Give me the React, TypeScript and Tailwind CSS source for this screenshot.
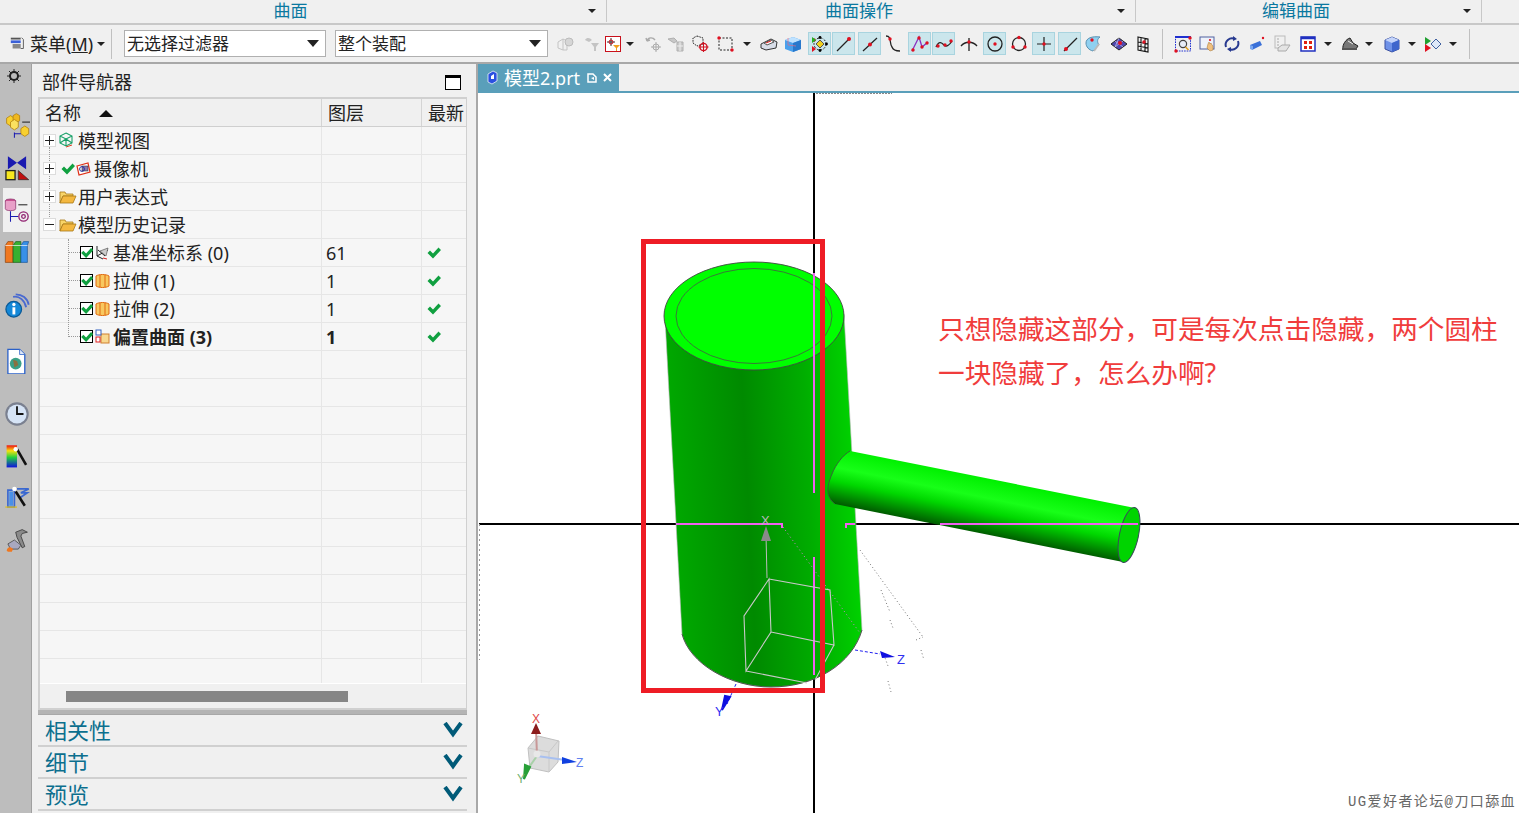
import type { ReactNode } from 'react'
import clsx from 'clsx'

const Ic = ({ children, s = 20 }: { children: ReactNode; s?: number }) => (
    <svg width={s} height={s} viewBox="0 0 20 20" className="block shrink-0">{children}</svg>
)
const Pt = ({ x, y, r = 1.7 }: { x: number; y: number; r?: number }) => <circle cx={x} cy={y} r={r} fill="#e01020" />
const Arrow = () => <div className="w-0 h-0 mx-auto border-l-[4px] border-r-[4px] border-t-[4px] border-l-transparent border-r-transparent border-t-[#222]" />

// toolbar, left to right. ml values come from measuring the icon centres
const tools: { ml: string; icon?: ReactNode; on?: boolean; arrow?: boolean; sep?: boolean }[] = [
    { ml: 'ml-[6px]', icon: <Ic><path d="M3 8l5-3v11l-5-2zM8 5l4 2v9l-4 0" fill="none" stroke="#c4c4c4" /><circle cx="14" cy="8" r="4" fill="#d6d6d6" stroke="#bbb" /></Ic> },
    { ml: 'ml-[4px]', icon: <Ic><path d="M4 6c2-3 5-2 7 0l-3 2zM10 9h8l-3 4v4h-2v-4z" fill="#c4c4c4" /></Ic> },
    { ml: 'ml-0', icon: <Ic><rect x="2.5" y="2.5" width="15" height="15" fill="#fff" stroke="#c8101c" /><path d="M8 4v8M4 8h8" stroke="#333" /><circle cx="8" cy="8" r="2" fill="none" stroke="#c8101c" /><path d="M10 11h7l-3 3v3h-1v-3z" fill="#f0a020" /></Ic> },
    { ml: 'ml-px', arrow: true },
    { ml: 'ml-[8px]', icon: <Ic><path d="M3 7c1-4 6-4 8-1M3 7l-1-3M3 7l3-1" fill="none" stroke="#aaa" strokeWidth="1.4" /><circle cx="12" cy="13" r="3" fill="none" stroke="#aaa" /><path d="M12 8v10M7 13h10" stroke="#aaa" /></Ic> },
    { ml: 'ml-0', icon: <Ic><path d="M2 5l6-1 3 3-3 2zM11 8h6v9h-6z" fill="#c8c8c8" stroke="#b0b0b0" /><path d="M14 8v9M11 12h6" stroke="#eee" /></Ic> },
    { ml: 'ml-[3px]', icon: <Ic><path d="M6 2l6 2v6l-6 2-4-3V4z" fill="none" stroke="#222" strokeDasharray="1.5 1" /><circle cx="12.5" cy="13" r="3.6" fill="none" stroke="#d01020" strokeWidth="1.4" /><path d="M12.5 8v10M7.5 13h10" stroke="#d01020" /></Ic> },
    { ml: 'ml-[3px]', icon: <Ic><rect x="3" y="4" width="13" height="12" fill="none" stroke="#222" strokeDasharray="2 1.5" /><Pt x={3} y={4} /><Pt x={16} y={16} /></Ic> },
    { ml: 'ml-[5px]', arrow: true },
    { ml: 'ml-[6px]', icon: <Ic><path d="M2 10l10-5 6 3-1 6-10 2-5-2z" fill="#d8dde8" stroke="#333" /><path d="M5 9l7-3 3 2-7 3z" fill="#fff" stroke="#555" /><path d="M7 9l5-2" stroke="#e02020" /></Ic> },
    { ml: 'ml-[2px]', icon: <Ic><path d="M2 6l8-3 8 3v9l-8 3-8-3z" fill="#4aa0ec" /><path d="M2 6l8 3 8-3-8-3z" fill="#bfe2ff" /><path d="M10 9v9l8-3V6z" fill="#2878cc" /><path d="M5 4v7l8 1" fill="none" stroke="#e86a80" strokeWidth=".7" /></Ic> },
    { ml: 'ml-[4px]', on: true, icon: <Ic><circle cx="10" cy="10" r="6" fill="none" stroke="#222" strokeDasharray="2 1.5" /><path d="M10 6l4 4-4 4-4-4z" fill="#f0d020" stroke="#555" /><Pt x={4} y={6} /><path d="M2 3l4 3-4 3z" fill="#20b020" /><path d="M2 12l4 3-4 3z" fill="#e01020" /><circle cx="10" cy="3.5" r="1.4" /><circle cx="10" cy="16.5" r="1.4" /><circle cx="16.5" cy="10" r="1.4" /></Ic> },
    { ml: 'ml-px', on: true, icon: <Ic><path d="M3 17L16 4" stroke="#222" strokeWidth="1.2" /><Pt x={15} y={5} r={2} /></Ic> },
    { ml: 'ml-[3px]', on: true, icon: <Ic><path d="M3 17L17 4" stroke="#222" strokeWidth="1.2" /><Pt x={10} y={10.5} r={2} /></Ic> },
    { ml: 'ml-px', icon: <Ic><path d="M3 2c6 0 3 7 6 11 1 3 4 4 8 4" fill="none" stroke="#222" strokeWidth="1.3" /><Pt x={7} y={5} /></Ic> },
    { ml: 'ml-[4px]', on: true, icon: <Ic><path d="M2 17L9 3l3 10 6-5" fill="none" stroke="#8a30c0" strokeWidth="1.3" /><Pt x={3} y={16} /><Pt x={9} y={4} /><Pt x={12} y={13} /><Pt x={17} y={9} /></Ic> },
    { ml: 'ml-px', on: true, icon: <Ic><path d="M2 13c3-7 6-4 8-2s5 1 8-4" fill="none" stroke="#222" strokeWidth="1.3" /><Pt x={4} y={12} /><Pt x={11} y={11} /><Pt x={17} y={7} /></Ic> },
    { ml: 'ml-[3px]', icon: <Ic><path d="M2 12c4-5 12-5 16 0M10 4v13" fill="none" stroke="#222" strokeWidth="1.3" /><Pt x={10} y={8} /></Ic> },
    { ml: 'ml-[3px]', on: true, icon: <Ic><circle cx="10" cy="10" r="7" fill="none" stroke="#222" strokeWidth="1.3" /><Pt x={10} y={10} /></Ic> },
    { ml: 'ml-[2px]', icon: <Ic><circle cx="10" cy="10" r="6.5" fill="none" stroke="#222" strokeWidth="1.3" /><Pt x={10} y={3.5} /><Pt x={4} y={13} /><Pt x={16} y={13} /></Ic> },
    { ml: 'ml-[2px]', on: true, icon: <Ic><path d="M10 3v14M3 10h14" stroke="#222" strokeWidth="1.2" /><Pt x={10} y={10} /></Ic> },
    { ml: 'ml-[3px]', on: true, icon: <Ic><path d="M4 17L17 4" stroke="#222" strokeWidth="1.2" /><Pt x={6} y={15} r={2} /></Ic> },
    { ml: 'ml-px', icon: <Ic><path d="M3 9c0-5 6-7 14-6-3 2-3 5-1 8l-6 6c-4-1-7-4-7-8z" fill="#8fd0f0" stroke="#5a90b0" /><path d="M16 10l-5 7" stroke="#bbb" strokeWidth="2" /><Pt x={9} y={6} /></Ic> },
    { ml: 'ml-[4px]', icon: <Ic><path d="M2 10l8-6 8 6-8 6z" fill="#5048b0" stroke="#222" /><path d="M6 7l8 6M10 4l-4 9M14 7l-8 6" stroke="#c8c8f0" strokeWidth=".7" /><Pt x={11} y={9} r={2} /></Ic> },
    { ml: 'ml-[2px]', icon: <Ic><path d="M5 3l10 2v13L5 16zM8 4v12M12 4.5v13M5 8l10 2M5 12l10 2" fill="none" stroke="#111" strokeWidth="1.1" /><Pt x={11} y={8} /></Ic> },
    { ml: 'ml-[8px]', sep: true },
    { ml: 'ml-[9px]', icon: <Ic><rect x="2.5" y="3" width="15" height="14" fill="none" stroke="#2030d0" strokeDasharray="1.6 1" /><path d="M2 3h16" stroke="#2030d0" strokeWidth="2" /><circle cx="10" cy="10" r="3.6" fill="#e8eef8" stroke="#444" strokeWidth="1.2" /><path d="M12.5 13l3 3" stroke="#e0a020" strokeWidth="1.6" /><Pt x={17} y={4} /><Pt x={3} y={17} /></Ic> },
    { ml: 'ml-[3px]', icon: <Ic><rect x="2" y="3" width="14" height="12" fill="#eef2fa" stroke="#5060a0" /><path d="M10 10l1-2 1 2 1-1 1 2 1 1v4l-3 1-3-3z" fill="#f0c080" stroke="#a07030" strokeWidth=".5" /><Pt x={12} y={6} r={1.1} /></Ic> },
    { ml: 'ml-[2px]', icon: <Ic><path d="M4 13a6.5 6.5 0 0 1 9-8M16 7a6.5 6.5 0 0 1-9 8" fill="none" stroke="#283a90" strokeWidth="2" /><path d="M11 2l4 3-4 2zM9 13l-4 2 4 3z" fill="#283a90" /></Ic> },
    { ml: 'ml-[3px]', icon: <Ic><path d="M3 11l10-4 2 4-10 5z" fill="#3a70d8" /><path d="M3 11l3 1v4l-3-1z" fill="#7aa8f0" /><Pt x={16} y={4} r={1.2} /></Ic> },
    { ml: 'ml-[3px]', icon: <Ic><rect x="3" y="2" width="10" height="12" fill="#f0f0f0" stroke="#bbb" /><path d="M5 5h2M5 8h2M5 11h2" stroke="#aaa" /><path d="M6 14l4-3h8l-4 6H6z" fill="#e4e4e4" stroke="#aaa" /></Ic> },
    { ml: 'ml-[4px]', icon: <Ic><rect x="3" y="3" width="14" height="14" fill="#fff" stroke="#2030c0" strokeWidth="1.5" /><path d="M3 4h14" stroke="#2030c0" strokeWidth="2.5" /><path d="M6 7h3v3H6zM11 7h3v3h-3zM6 12h3v3H6zM11 12h3v3h-3z" fill="#e02010" /></Ic> },
    { ml: 'ml-[4px]', arrow: true },
    { ml: 'ml-[6px]', icon: <Ic><path d="M3 15c-1-4 3-10 7-11l3 5 5 3-2 3z" fill="#777" stroke="#222" /><path d="M2 14h15v2H2z" fill="#555" /><path d="M8 7l5 3" stroke="#eee" /></Ic> },
    { ml: 'ml-[3px]', arrow: true },
    { ml: 'ml-[7px]', icon: <Ic><path d="M3 6l7-3 7 3v9l-7 3-7-3z" fill="#6f92e8" stroke="#3a50a0" /><path d="M3 6l7 3 7-3-7-3z" fill="#c4d4fa" /><path d="M10 9v9l7-3V6z" fill="#3f66cc" /></Ic> },
    { ml: 'ml-[4px]', arrow: true },
    { ml: 'ml-[5px]', icon: <Ic><path d="M2 3l6 4-6 4z" fill="#20a030" /><path d="M2 10l6 4-6 4z" fill="#e01020" /><path d="M8 10l5-5 5 5-5 5z" fill="#dfe8f8" stroke="#4060a0" /></Ic> },
    { ml: 'ml-[4px]', arrow: true },
    { ml: 'ml-[11px]', sep: true },
]

const ToolBar = () => (
    <div className="h-[39px] flex items-center bg-[#f0f0f0] border-b-2 border-[#a8a8a8] shrink-0">
        <div className="w-[111px] flex items-center pl-[9px] gap-[3px]">
            <Ic s={18}><path d="M2 3h11v2H2z" fill="#555" /><path d="M2 6h11v3H2z" fill="#3a60d8" /><path d="M4 10h9v5H4z" fill="#888" /><path d="M14 3l2 2v10h-3" fill="none" stroke="#555" /></Ic>
            <span className="text-[18px] leading-none text-[#222]">菜单(<u>M</u>)</span>
            <div className="ml-[1px]"><Arrow /></div>
        </div>
        <div className="w-px h-[30px] bg-[#c0c0c0]" />
        <div className="ml-[12px] w-[202px] h-[27px] bg-white border border-[#b0b0b0] flex items-center justify-between pl-[2px] pr-[6px]">
            <span className="text-[17px] text-[#222]">无选择过滤器</span>
            <div className="w-0 h-0 border-l-[6px] border-r-[6px] border-t-[7px] border-l-transparent border-r-transparent border-t-[#222]" />
        </div>
        <div className="ml-[9px] w-[213px] h-[27px] bg-white border border-[#b0b0b0] flex items-center justify-between pl-[2px] pr-[6px]">
            <span className="text-[17px] text-[#222]">整个装配</span>
            <div className="w-0 h-0 border-l-[6px] border-r-[6px] border-t-[7px] border-l-transparent border-r-transparent border-t-[#222]" />
        </div>
        {tools.map((t, i) => {
            if (t.sep) return <div key={i} className={clsx('w-px h-[30px] bg-[#c0c0c0] shrink-0', t.ml)} />
            if (t.arrow) return <div key={i} className={clsx('w-[10px] shrink-0', t.ml)}><Arrow /></div>
            return (
                <div key={i} className={clsx('h-[23px] shrink-0 flex items-center justify-center', t.ml, t.on ? 'w-[23px] bg-[#cbe6ec] border border-[#a9d4df]' : 'w-[22px]')}>
                    {t.icon}
                </div>
            )
        })}
    </div>
)

const RibbonTitles = () => (
    <div className="h-[23px] flex bg-[#f0f0f0] border-b-2 border-[#c8c8c8] box-content shrink-0">
        <div className="w-[607px] relative flex items-center justify-center pr-[25px] border-r border-[#c8c8c8] mb-px">
            <span className="text-[17px] leading-[20px] text-[#0a78a0]">曲面</span>
            <div className="absolute right-[10px] top-[9px]"><Arrow /></div>
        </div>
        <div className="w-[529px] relative flex items-center justify-center pr-[24px] border-r border-[#c8c8c8] mb-px">
            <span className="text-[17px] leading-[20px] text-[#0a78a0]">曲面操作</span>
            <div className="absolute right-[10px] top-[9px]"><Arrow /></div>
        </div>
        <div className="w-[346px] relative flex items-center justify-center pr-[25px] border-r border-[#c8c8c8] mb-px">
            <span className="text-[17px] leading-[20px] text-[#0a78a0]">编辑曲面</span>
            <div className="absolute right-[10px] top-[9px]"><Arrow /></div>
        </div>
    </div>
)

const railIcons: { cls: string; icon: ReactNode }[] = [
    { cls: 'h-[42px] mt-[17px]', icon: <Ic s={26}><path d="M2 4l3-2 3 2v4l-3 2-3-2z" fill="#f8d030" stroke="#b08010" strokeWidth=".6" /><path d="M7 2l2.5-1.5L12 2v4l-2.5 1.500L7 6z" fill="#f0b820" stroke="#b08010" strokeWidth=".6" /><path d="M5 7l3-2 3 2v4l-3 2-3-2z" fill="#fbe060" stroke="#b08010" strokeWidth=".6" /><path d="M13 12l3-2 3 2v4l-3 2-3-2z" fill="#f8d030" stroke="#b08010" strokeWidth=".6" /><path d="M8 15v4M8 16h5" stroke="#1a1ab0" strokeWidth=".8" fill="none" /><path d="M14 7h6" stroke="#222" strokeWidth=".8" /></Ic> },
    { cls: 'h-[42px]', icon: <Ic s={26}><path d="M3 1l7 5-7 5zM17 1l-7 5 7 5z" fill="#1a1ab0" /><rect x="1.5" y="12" width="7" height="7" fill="#f8e820" stroke="#222" /><path d="M11 19l0-7 8 7z" fill="#c01010" stroke="#222" strokeWidth=".5" /></Ic> },
    { cls: 'h-[44px] -my-px bg-[#f0f0f0]', icon: <Ic s={26}><ellipse cx="5" cy="3" rx="4" ry="1.5" fill="#c85090" stroke="#802060" strokeWidth=".5" /><path d="M1 3v6c0 2 8 2 8 0V3" fill="#e8a0c8" stroke="#802060" strokeWidth=".5" /><path d="M11 6h7" stroke="#222" strokeWidth=".8" /><path d="M5 11v8M5 15h6" stroke="#1a1ab0" strokeWidth=".8" /><circle cx="15" cy="15" r="3.6" fill="none" stroke="#902070" /><circle cx="15" cy="15" r="1.4" fill="none" stroke="#902070" /></Ic> },
    { cls: 'h-[42px]', icon: <Ic s={26}><path d="M1 5l2-3h4v16H1z" fill="#f07820" stroke="#804010" strokeWidth=".5" /><path d="M7 5l2-3h4v16H7z" fill="#38b030" stroke="#185818" strokeWidth=".5" /><path d="M13 5l2-3h4l-1 3v13h-5z" fill="#3890e8" stroke="#1a5090" strokeWidth=".5" /><path d="M1 5h17" stroke="#fff" strokeWidth=".5" /></Ic> },
    { cls: 'h-[42px] mt-[12px]', icon: <Ic s={26}><circle cx="7.5" cy="12.5" r="6" fill="#1488d8" stroke="#0a5a98" /><rect x="6.5" y="11" width="2.2" height="5.5" fill="#fff" /><circle cx="7.6" cy="8.8" r="1.3" fill="#fff" /><path d="M7 3c5-1 9 3 10 8M9 1c5 0 9 3 10 8" fill="none" stroke="#4a6ad0" strokeWidth="1.4" /></Ic> },
    { cls: 'h-[42px] mt-[13px]', icon: <Ic s={26}><path d="M3 1h9l4 4v15H3z" fill="#fff" stroke="#2a60c8" /><path d="M12 1v4h4" fill="#dfe8f8" stroke="#2a60c8" strokeWidth=".6" /><circle cx="9" cy="12" r="4.5" fill="#3aa088" /><path d="M7 9l3 1 1 3-3 2z" fill="#8a7040" /></Ic> },
    { cls: 'h-[42px] mt-[11px]', icon: <Ic s={26}><circle cx="10" cy="10" r="9" fill="#7a8090" /><circle cx="10" cy="10" r="7.4" fill="#d6e4f6" /><path d="M10 4v6h5" fill="none" stroke="#111" strokeWidth="1.4" /></Ic> },
    { cls: 'h-[42px] mt-px', icon: <Ic s={26}><defs><linearGradient id="rb" x1="0" x2="0" y1="0" y2="1"><stop offset="0" stopColor="#f01010" /><stop offset=".25" stopColor="#f8e010" /><stop offset=".55" stopColor="#20d040" /><stop offset="1" stopColor="#1010e0" /></linearGradient></defs><rect x="2" y="1" width="8" height="17" fill="url(#rb)" /><path d="M10 4l7 12" stroke="#111" strokeWidth="2" /><circle cx="9" cy="4" r="1.7" fill="#fff" /></Ic> },
    { cls: 'h-[42px] -mt-px', icon: <Ic s={26}><path d="M3 4h5v13H3zM10 3h9l-6 3h5l-6 4" fill="none" stroke="#3a68d0" strokeWidth="1.3" /><path d="M4 5h3v11H4z" fill="#4a90e8" /><path d="M1 17h9" stroke="#e0c020" strokeWidth="1" /><path d="M9 5l7 11" stroke="#111" strokeWidth="2" /><circle cx="8" cy="3" r="1.7" fill="#fff" /></Ic> },
    { cls: 'h-[42px]', icon: <Ic s={26}><path d="M9 4l5-2 4 2-4 1-1 2 3 8-2 1-4-8z" fill="#8a8a8a" stroke="#333" strokeWidth=".6" /><path d="M3 13l5-3 5 4-2 3H5z" fill="#a8a8c0" stroke="#444" strokeWidth=".6" /><path d="M2 18c1-3 3-3 5-1l-1 2H3z" fill="#f07820" /></Ic> },
]

const Check = ({ cls }: { cls: string }) => (
    <svg width="14" height="12" viewBox="0 0 14 12" className={clsx('block shrink-0', cls)}>
        <path d="M0.5 6l2.5-2.500 3 3L11.500 0.500 14 3 6 11.500z" fill="#10a040" />
    </svg>
)

const Rail = () => (
    <div className="w-[32px] shrink-0 bg-[#bdbdbd] border-r border-[#a0a0a0] flex flex-col items-stretch">
        <div className="h-[24px] flex items-center justify-center pr-[4px]">
            <svg width="14" height="14" viewBox="0 0 14 14"><circle cx="7" cy="7" r="4" fill="none" stroke="#222" strokeWidth="2" /><path d="M7 0v3M7 11v3M0 7h3M11 7h3M2 2l2 2M10 10l2 2M2 12l2-2M12 2l-2 2" stroke="#222" /></svg>
        </div>
        {railIcons.map((r, i) => (
            <div key={i} className={clsx('flex items-center justify-center ml-[3px] pr-px shrink-0', r.cls)}>{r.icon}</div>
        ))}
    </div>
)

const Expander = ({ open }: { open?: boolean }) => (
    <div className="relative z-10 w-[13px] h-[13px] bg-white border border-[#dcdcdc] flex items-center justify-center shrink-0">
        <div className="absolute w-[9px] h-px bg-[#222]" />
        {!open && <div className="absolute h-[9px] w-px bg-[#222]" />}
    </div>
)

const Folder = () => (
    <svg width="18" height="14" viewBox="0 0 18 14" className="block shrink-0">
        <path d="M1 2h5l1 2h7v2H4l-3 7z" fill="#f8d468" stroke="#a87818" strokeWidth=".8" />
        <path d="M1 13l3-7h13l-3 7z" fill="#f4b840" stroke="#a87818" strokeWidth=".8" />
    </svg>
)

const Tick = () => (
    <div className="w-[13px] h-[13px] border border-black bg-white flex items-center justify-center shrink-0">
        <Check cls="scale-90" />
    </div>
)

const Extrude = () => (
    <svg width="15" height="14" viewBox="0 0 15 14" className="block shrink-0">
        <path d="M1 2c3-2 10-2 13 0v10c-3 2-10 2-13 0z" fill="#f8c860" stroke="#e06810" />
        <path d="M5 1v12M10 1v12" stroke="#e06810" />
    </svg>
)

const treeRows: { name: string; layer?: string; latest?: boolean; bold?: boolean; icon: ReactNode }[] = [
    { name: '基准坐标系 (0)', layer: '61', latest: true, icon: <svg width="15" height="15" viewBox="0 0 15 15" className="block shrink-0"><path d="M2 1v10l6 3M2 11l11-6M3 5l7 6" fill="none" stroke="#222" /><path d="M5 6l8-3-2 8z" fill="#ccc" stroke="#444" strokeWidth=".6" /><path d="M8 13l4 1" stroke="#d02020" /></svg> },
    { name: '拉伸 (1)', layer: '1', latest: true, icon: <Extrude /> },
    { name: '拉伸 (2)', layer: '1', latest: true, icon: <Extrude /> },
    { name: '偏置曲面 (3)', layer: '1', latest: true, bold: true, icon: <svg width="15" height="15" viewBox="0 0 15 15" className="block shrink-0"><rect x="6" y="5" width="8" height="9" fill="#f8d890" stroke="#d08030" /><rect x="1" y="1" width="5" height="5" fill="#fff" stroke="#3060c0" /><rect x="1" y="8" width="4" height="5" fill="#fff" stroke="#e02020" /></svg> },
]

const Row = ({ name, children, layer, latest, bold }: { name?: string; children?: ReactNode; layer?: string; latest?: boolean; bold?: boolean }) => (
    <div className="h-[28px] flex border-b border-[#e6e6e6] bg-[#f6f6f6] shrink-0">
        <div className="w-[281px] flex items-center relative">
            {children}
            {name && <span className={clsx('text-[18px] pt-px text-[#222] whitespace-nowrap', bold && 'font-bold')}>{name}</span>}
        </div>
        <div className={clsx('w-[100px] border-l border-[#e6e6e6] flex items-center pl-[4px] pt-px text-[18px] text-[#222]', bold && 'font-bold')}>{layer}</div>
        <div className="flex-1 border-l border-[#e6e6e6] flex items-center pl-[5px]">{latest && <Check cls="" />}</div>
    </div>
)

const Navigator = () => (
    <div className="w-[429px] shrink-0 flex flex-col pl-[6px] pr-[9px] bg-[#f0f0f0] border-r-2 border-[#a8a8a8] box-content">
        <div className="h-[33px] flex items-center justify-between pl-[4px] pr-[6px] pt-[3px] shrink-0">
            <span className="text-[18px] text-[#222]">部件导航器</span>
            <div className="w-[16px] h-[15px] border border-black border-t-[3px] bg-white" />
        </div>
        <div className="h-[613px] border-2 border-[#d0d0d0] border-r-[1px] flex flex-col overflow-hidden shrink-0">
            <div className="h-[28px] flex border-b border-[#cfcfcf] bg-[#f0f0f0] shrink-0">
                <div className="w-[281px] flex items-center pl-[5px] pt-[2px] gap-[18px] text-[18px] text-[#222]">
                    名称
                    <div className="w-0 h-0 border-l-[7px] border-r-[7px] border-b-[7px] border-l-transparent border-r-transparent border-b-[#111]" />
                </div>
                <div className="w-[100px] border-l border-[#d4d4d4] flex items-center pl-[6px] pt-[2px] text-[18px] text-[#222]">图层</div>
                <div className="flex-1 border-l border-[#d4d4d4] flex items-center pl-[6px] pt-[2px] text-[18px] text-[#222]">最新</div>
            </div>
            <div className="h-[556px] flex flex-col overflow-hidden relative shrink-0">
                {/* tree connectors */}
                <div className="absolute left-[9px] top-[20px] h-[78px] border-l border-dotted border-[#999]" />
                <div className="absolute left-[28px] top-[112px] h-[98px] border-l border-dotted border-[#999]" />
                <Row name="模型视图">
                    <div className="flex items-center pl-[3px] gap-[2px] pr-[2px]">
                        <Expander />
                        <svg width="18" height="17" viewBox="0 0 18 17" className="block shrink-0"><path d="M8 1l6 3v7l-6 3-6-3V4zM2 4l6 3 6-3M8 7v7M2 11l6-4 6 4" fill="none" stroke="#18a068" strokeWidth="1.1" /><path d="M8 15l6-2" stroke="#e04020" /></svg>
                    </div>
                </Row>
                <Row name="摄像机">
                    <div className="flex items-center pl-[3px]">
                        <Expander />
                        <Check cls="ml-[5px]" />
                        <svg width="16" height="14" viewBox="0 0 16 14" className="block shrink-0 ml-px"><path d="M1 4l11-3 2 9-11 3z" fill="#fff" stroke="#e03018" strokeWidth="1.2" /><rect x="6" y="4" width="6" height="5" fill="#8878b0" stroke="#222" strokeWidth=".5" /><circle cx="6" cy="7" r="2.4" fill="none" stroke="#2030a0" /></svg>
                        <div className="w-[2px]" />
                    </div>
                </Row>
                <Row name="用户表达式">
                    <div className="flex items-center pl-[3px] gap-[3px] pr-px">
                        <Expander />
                        <Folder />
                    </div>
                </Row>
                <Row name="模型历史记录">
                    <div className="flex items-center pl-[3px] gap-[3px] pr-px">
                        <Expander open />
                        <Folder />
                    </div>
                </Row>
                {treeRows.map((r) => (
                    <Row key={r.name} name={r.name} layer={r.layer} latest={r.latest} bold={r.bold}>
                        <div className="w-[11px] ml-[29px] border-t border-dotted border-[#999] shrink-0" />
                        <Tick />
                        <div className="ml-[2px] mr-[3px]">{r.icon}</div>
                    </Row>
                ))}
                {Array.from({ length: 12 }).map((_, i) => <Row key={i} />)}
            </div>
            <div className="h-[26px] flex items-center pl-[26px] bg-[#f0f0f0] border-t border-white shrink-0">
                <div className="w-[282px] h-[11px] bg-[#868686]" />
            </div>
        </div>
        <div className="h-[5px] bg-[#b4b4b4] border-b border-[#a8a8a8] shrink-0" />
        {['相关性', '细节', '预览'].map((t) => (
            <div key={t} className="h-[32px] flex items-end justify-between pl-[7px] pr-[4px] border-b-2 border-[#d0d0d0] shrink-0">
                <span className="text-[22px] leading-[29px] text-[#0c6f8e]">{t}</span>
                <svg width="20" height="16" viewBox="0 0 20 16" className="mb-[7px] block"><path d="M2 1l8 11 8-11" fill="none" stroke="#005a78" strokeWidth="4" /></svg>
            </div>
        ))}
    </div>
)

const Model = () => (
    <svg viewBox="478 93 1041 720" width="1041" height="720" className="absolute inset-0 block">
        <defs>
            <linearGradient id="bigBody" gradientUnits="userSpaceOnUse" x1="665" y1="330" x2="860" y2="320">
                <stop offset="0" stopColor="#00a800" />
                <stop offset=".38" stopColor="#008a00" />
                <stop offset=".7" stopColor="#00ae00" />
                <stop offset="1" stopColor="#00dc00" />
            </linearGradient>
            <linearGradient id="smallBody" gradientUnits="userSpaceOnUse" x1="990" y1="479" x2="979" y2="533">
                <stop offset="0" stopColor="#00f000" />
                <stop offset=".35" stopColor="#18ff18" />
                <stop offset=".6" stopColor="#00d800" />
                <stop offset="1" stopColor="#005c00" />
            </linearGradient>
        </defs>

        {/* crosshair, behind the solids */}
        <path d="M479 524H1519M814 93V813" stroke="#000" strokeWidth="1.5" fill="none" shapeRendering="crispEdges" />
        <path d="M816 93.5H892" stroke="#888" strokeDasharray="2 1" fill="none" />
        <path d="M479.5 524V660" stroke="#999" strokeDasharray="2 3" fill="none" />

        {/* big cylinder */}
        <path d="M665 318L682 634C690 664 730 687 771 687C815 687 852 664 862 630L844 314Z" fill="url(#bigBody)" stroke="#b8b8b8" strokeWidth=".6" />
        <path d="M682 634C690 664 730 687 771 687C815 687 852 664 862 630" fill="none" stroke="#3a3a3a" strokeWidth=".8" />
        <ellipse cx="754" cy="316" rx="90" ry="54" fill="#00ff00" stroke="#444" strokeWidth=".9" />
        <ellipse cx="754" cy="316" rx="78" ry="47.5" fill="none" stroke="#3f6a3f" strokeWidth=".9" />

        {/* small cylinder */}
        <path d="M850 451L1135 508L1123 562L835 504C826 497 826 488 832 474C836 464 843 455 850 451Z" fill="url(#smallBody)" />
        <path d="M835 504C826 497 826 488 832 474C836 464 843 455 850 451" fill="none" stroke="#3a5a3a" strokeWidth=".9" />
        <ellipse cx="1129" cy="535" rx="9.5" ry="28" transform="rotate(12 1129 535)" fill="#00d400" stroke="#3a4a5a" strokeWidth="1" />

        {/* hidden lines shown through */}
        <g shapeRendering="crispEdges" fill="none" stroke="#f060f0" strokeWidth="1.5">
            <path d="M814 273V493M814 557V675" />
            <path d="M676 524H782V528M846 528V524H855M940 524H1138" />
        </g>
        <path d="M783 527L860 633" stroke="#d080d0" strokeDasharray="1 3" fill="none" />
        <path d="M860 550L923 637M881 590L890 612M916 640L923 637M890 620L893 628M884 655L888 666M888 681L891 692M921 650L924 660" stroke="#777" strokeDasharray="1 2.5" fill="none" />

        {/* datum box */}
        <path d="M769 579L771 632L746 671L744 616ZM769 579L830 590L834 645L771 632M746 671L807 683M834 645L815 680" fill="none" stroke="#c8c8c8" strokeWidth="1.1" />
        <path d="M767 578L766 535" stroke="#bbb" strokeWidth="1" />
        <path d="M766 526L771 541H761Z" fill="#8a8a8a" />
        <text x="761" y="525" fontSize="13" fill="#b8b8b8" fontFamily="Liberation Sans, sans-serif">X</text>
        <path d="M855 650L880 654" stroke="#2020f0" strokeDasharray="3 2" />
        <path d="M880 651L895 657L882 658Z" fill="#1010e0" />
        <text x="897" y="664" fontSize="13" fill="#3030f0" fontFamily="Liberation Sans, sans-serif">Z</text>
        <path d="M736 684L727 704" stroke="#2020f0" strokeDasharray="3 2" />
        <path d="M730 697L722 710L725 696Z" fill="#1010e0" stroke="#1010e0" strokeWidth="2" />
        <text x="715" y="716" fontSize="13" fill="#3030f0" fontFamily="Liberation Sans, sans-serif">Y</text>

        {/* annotation box */}
        <rect x="643.5" y="241.5" width="179" height="449" fill="none" stroke="#ee1c25" strokeWidth="5" />

        {/* orientation triad */}
        <path d="M528 748L538 736L559 741L558 762L549 772L530 768Z" fill="#dcdcdc" stroke="#c0c0c0" />
        <path d="M528 748L549 752L558 741M549 752L549 772" fill="none" stroke="#c8c8c8" />
        <path d="M537 756L536 728" stroke="#c89898" strokeWidth="2" />
        <path d="M536 723L541 734H531Z" fill="#8c1c1c" />
        <path d="M537 756L565 760" stroke="#a8c0f0" strokeWidth="2" />
        <path d="M562 757L577 762L562 764Z" fill="#1040e0" />
        <path d="M537 756L527 770" stroke="#a8d0a8" strokeWidth="2" />
        <path d="M530 767L524 779L525 765Z" fill="#28a038" stroke="#28a038" strokeWidth="2" />
        <circle cx="537" cy="754" r="3.5" fill="#e8e8e8" />
        <text x="532" y="723" fontSize="12" fill="#e04848" fontFamily="Liberation Sans, sans-serif">X</text>
        <text x="576" y="767" fontSize="12" fill="#6080f0" fontFamily="Liberation Sans, sans-serif">Z</text>
        <text x="517" y="783" fontSize="12" fill="#70b070" fontFamily="Liberation Sans, sans-serif">Y</text>
    </svg>
)

const Viewport = () => (
    <div className="flex-1 flex flex-col min-w-0">
        <div className="h-[29px] flex items-end bg-[#f0f0f0] border-b-2 border-[#5a9fba] shrink-0">
            <div className="h-[27px] w-[141px] bg-[#5a9fba] flex items-center pl-[7px] text-white shrink-0">
                <svg width="14" height="15" viewBox="0 0 14 15" className="block shrink-0"><path d="M3 4l5-3 4 2v8l-5 3-4-2z" fill="#2a50e0" stroke="#fff" strokeWidth=".7" /><path d="M6 6l3-2v5H6z" fill="#fff" /></svg>
                <span className="ml-[5px] text-[18px] leading-none whitespace-nowrap">模型2.prt</span>
                <svg width="10" height="10" viewBox="0 0 10 10" className="ml-[7px] block shrink-0"><path d="M1 1h5l3 3v5H1z" fill="none" stroke="#fff" strokeWidth="1.5" /><path d="M4 5l3-1v3z" fill="#fff" /></svg>
                <svg width="9" height="9" viewBox="0 0 9 9" className="ml-[6px] block shrink-0"><path d="M1 1l7 7M8 1l-7 7" stroke="#fff" strokeWidth="2" /></svg>
            </div>
        </div>
        <div className="relative flex-1 bg-white overflow-hidden">
            <Model />
            <div className="absolute left-[460px] top-[214px] w-[575px] text-[26.67px] leading-[44px] text-[#f03c3c] whitespace-pre">只想隐藏这部分，可是每次点击隐藏，两个圆柱{'\n'}一块隐藏了，怎么办啊?</div>
            <div className="absolute right-[3px] bottom-[2px] font-['Liberation_Mono','Noto_Sans_CJK_SC',monospace] text-[14px] leading-[18px] text-[#666] whitespace-nowrap tracking-[1.4px]">UG爱好者论坛@刀口舔血</div>
        </div>
    </div>
)

export default function App() {
    return (
        <div className="w-[1519px] h-[813px] overflow-hidden flex flex-col bg-[#f0f0f0] font-['Noto_Sans','Noto_Sans_CJK_SC',sans-serif]">
            <RibbonTitles />
            <ToolBar />
            <div className="flex-1 flex min-h-0">
                <Rail />
                <Navigator />
                <Viewport />
            </div>
        </div>
    )
}
